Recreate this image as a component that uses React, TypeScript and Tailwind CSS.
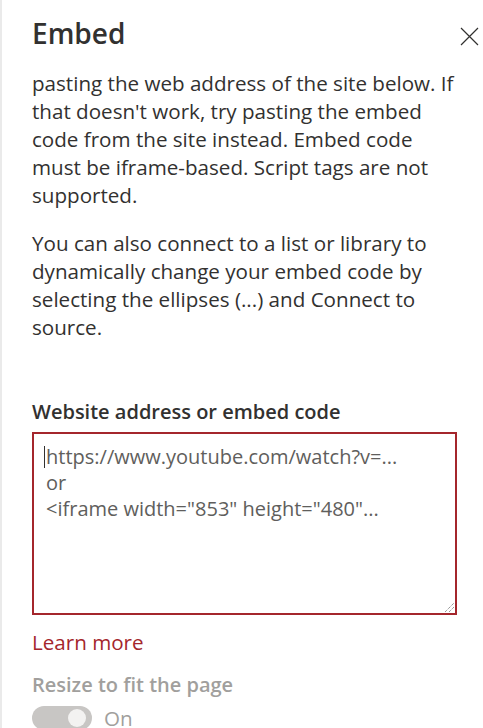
export default function App() {
  return (
    <div className="h-[728px] w-[483px] overflow-hidden border-l-2 border-[#eaeaea] bg-white font-['Open_Sans',sans-serif] text-[#323130]">
      <header className="flex h-[69px] items-start justify-between pl-[30px] pr-[4px] pt-[16px]">
        <h1 className="text-[28px] font-semibold leading-[34px]">Embed</h1>
        <button className="mt-[10px] flex h-[20px] w-[20px] items-center justify-center" aria-label="Close">
          <svg width="19" height="19" viewBox="0 0 19 19" fill="none" stroke="#323130" strokeWidth="1.2">
            <path d="M1 1 L18 18 M18 1 L1 18" />
          </svg>
        </button>
      </header>
      <div className="flex flex-col pl-[30px] pr-[26px] text-[20.6px] leading-[28px]">
        <p>
          pasting the web address of the site below. If that doesn't work, try pasting the embed code from the site
          instead. Embed code must be iframe-based. Script tags are not supported.
        </p>
        <p className="mt-[20px]">
          You can also connect to a list or library to dynamically change your embed code by selecting the ellipses
          (...) and Connect to source.
        </p>
        <label className="mt-[57px] text-[20px] font-semibold leading-[28px]">Website address or embed code</label>
        <div className="relative mt-[6px] h-[183px] w-[425px] border-2 border-[#a4262c] px-[12px] pt-[10px] text-[20px] leading-[26px] text-[#605e5c]">
          <div className="relative">
            <span className="absolute left-[-2px] top-[2px] h-[22px] w-px bg-[#323130]" />
            https://www.youtube.com/watch?v=...
          </div>
          <div>or</div>
          <div>&lt;iframe width="853" height="480"...</div>
          {/* resize grip */}
          <svg className="absolute bottom-[1px] right-[1px]" width="10" height="10" viewBox="0 0 10 10" fill="none" stroke="#6b6b6b" strokeWidth="1" strokeDasharray="1 1">
            <path d="M1 10 L10 1 M5 10 L10 5" />
          </svg>
        </div>
        <a className="mt-[13px] text-[20.6px] leading-[28px] text-[#a4262c]" href="#">
          Learn more
        </a>
        <div className="mt-[15px] text-[20px] font-semibold leading-[28px] text-[#a19f9d]">Resize to fit the page</div>
        <div className="mt-[5px] flex items-center gap-[12px]">
          <div className="flex h-[24px] w-[60px] items-center justify-end rounded-full bg-[#c8c6c4] pr-[6px]">
            <div className="h-[18px] w-[18px] rounded-full bg-[#f3f2f1]" />
          </div>
          <span className="text-[20.6px] leading-[28px] text-[#a19f9d]">On</span>
        </div>
      </div>
    </div>
  );
}
